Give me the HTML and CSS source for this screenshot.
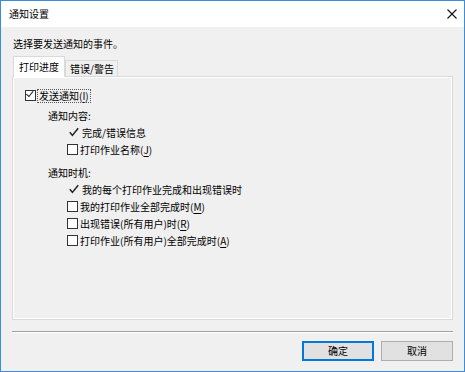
FILE: index.html
```html
<!DOCTYPE html>
<html lang="zh-CN">
<head>
    <meta charset="UTF-8">
    <title>通知设置</title>
    <link rel="stylesheet" href="styles.css">
</head>
<body>
    <div class="window">
        <div class="titlebar">
            <span class="title">通知设置</span>
            <svg class="close" width="10" height="10" viewBox="0 0 10 10">
                <path d="M0.5 0.5 L9.5 9.5 M9.5 0.5 L0.5 9.5" stroke="#111" stroke-width="1.1"/>
            </svg>
        </div>
        <div class="content">
            <p class="prompt">选择要发送通知的事件。</p>
            <div class="tabs">
                <div class="tab active">打印进度</div>
                <div class="tab">错误/警告</div>
            </div>
            <div class="panel">
                <label class="row main">
                    <span class="box checked"></span>
                    <span class="focus">发送通知(<u>I</u>)</span>
                </label>

                <div class="group">
                    <div class="caption">通知内容:</div>
                    <div class="row fixed">
                        <svg class="tick" width="10" height="10" viewBox="0 0 10 10"><path d="M0.8 5.2 L3.4 8.4 L9.2 1.2" fill="none" stroke="#222" stroke-width="1.5"/></svg>完成/错误信息
                    </div>
                    <label class="row"><span class="box"></span>打印作业名称(<u>J</u>)</label>
                </div>

                <div class="group">
                    <div class="caption">通知时机:</div>
                    <div class="row fixed">
                        <svg class="tick" width="10" height="10" viewBox="0 0 10 10"><path d="M0.8 5.2 L3.4 8.4 L9.2 1.2" fill="none" stroke="#222" stroke-width="1.5"/></svg>我的每个打印作业完成和出现错误时
                    </div>
                    <label class="row"><span class="box"></span>我的打印作业全部完成时(<u>M</u>)</label>
                    <label class="row"><span class="box"></span>出现错误(所有用户)时(<u>R</u>)</label>
                    <label class="row"><span class="box"></span>打印作业(所有用户)全部完成时(<u>A</u>)</label>
                </div>
            </div>
            <div class="separator"></div>
            <div class="buttons">
                <button class="btn default">确定</button>
                <button class="btn">取消</button>
            </div>
        </div>
    </div>
</body>
</html>
```

FILE: styles.css
```css
body {
    margin: 0;
    font-family: "Noto Sans CJK SC", "Noto Sans", sans-serif;
    font-size: 10px;
    color: #000;
}
.window {
    width: 465px;
    height: 372px;
    box-sizing: border-box;
    border: 1px solid #3a8ddb;
    background-color: #f0f0f0;
    display: flex;
    flex-direction: column;
}
.titlebar {
    height: 26px;
    background-color: #fff;
    display: flex;
    align-items: center;
    justify-content: space-between;
    padding: 0 6px 0 8px;
}
.title {
    line-height: 14px;
}
.close {
    margin-right: 1px;
}
.content {
    flex: 1;
    padding: 0 11px;
    display: flex;
    flex-direction: column;
}
.prompt {
    margin: 9px 0 0 1px;
    line-height: 16px;
}
.tabs {
    display: flex;
    align-items: flex-end;
    height: 19px;
    margin-top: 5px;
    padding-left: 1px;
    position: relative;
    z-index: 1;
}
.tab {
    height: 15px;
    line-height: 15px;
    padding: 0 3px 0 4px;
    border: 1px solid #d9d9d9;
    border-bottom: none;
    background-color: #f0f0f0;
}
.tab.active {
    height: 20px;
    line-height: 19px;
    background-color: #fff;
    margin-bottom: -1px;
    padding: 0 5px;
}
.panel {
    height: 244px;
    box-sizing: border-box;
    border: 1px solid #d9d9d9;
    box-shadow: inset 0 0 0 1px #fff;
    padding: 10px 0 0 12px;
}
.row {
    display: flex;
    align-items: center;
    height: 17px;
    line-height: 17px;
}
.row u {
    text-decoration-thickness: 1px;
    text-underline-offset: 2px;
}
.box {
    width: 9px;
    height: 9px;
    border: 1px solid #333;
    background-color: #fff;
    margin-right: 2px;
    position: relative;
}
.box.checked::after {
    content: "";
    position: absolute;
    left: 1px;
    top: 0;
    width: 6px;
    height: 3px;
    border-left: 1px solid #222;
    border-bottom: 1px solid #222;
    transform: translate(0, 1px) rotate(-50deg);
    transform-origin: 30% 60%;
}
.focus {
    outline: 1px dotted #555;
    outline-offset: 0;
    line-height: 12px;
    padding: 0 1px;
}
.row.main {
    margin-bottom: 4px;
}
.group {
    padding-left: 23px;
    margin-top: 1px;
}
.group + .group {
    margin-top: 7px;
}
.caption {
    height: 16px;
    line-height: 16px;
}
.group .row {
    padding-left: 19px;
}
.tick {
    margin: 0 3px 1px 2px;
}
.separator {
    height: 1px;
    background-color: #a0a0a0;
    border-bottom: 1px solid #fff;
    margin-top: 11px;
}
.buttons {
    display: flex;
    justify-content: flex-end;
    gap: 7px;
    margin-top: 8px;
}
.btn {
    width: 72px;
    height: 20px;
    box-sizing: border-box;
    border: 1px solid #adadad;
    background-color: #e1e1e1;
    font-family: inherit;
    font-size: 10px;
    line-height: 16px;
    padding: 0;
    color: #000;
}
.btn.default {
    border: 2px solid #0078d7;
}
```
